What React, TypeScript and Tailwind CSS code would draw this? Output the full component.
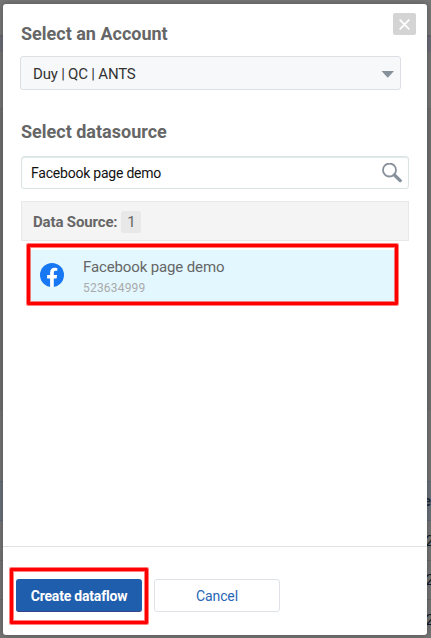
import React from "react";

function PageBehind() {
  return (
    <div className="absolute inset-0 overflow-hidden bg-[#727272]" aria-hidden="true">
      <div className="h-[35px] bg-[#777777]" />
      <div className="h-[17px] border-t-2 border-[#65656f] bg-[#6c6c76]" />
      <div className="h-[56px] bg-[#737373]" />
      <div className="h-[301px] border-t border-[#6a6a6a] bg-[#6f6f6f]" />
      <div className="h-[72px] border-t border-[#6c6c6c] bg-[#737373]" />
      <div className="flex h-[40px] items-center justify-end border-y border-[#5f6a76] bg-[#6a7179] text-[14px] font-bold text-[#222c3a]">
        <span>e</span>
      </div>
      {["a", "b", "c"].map((row) => (
        <div
          key={row}
          className="flex h-[39.5px] items-center justify-end border-b border-[#696969] bg-[#747474] text-[15px] text-[#101a26]"
        >
          <span className="-mr-[3px] pt-px">2</span>
        </div>
      ))}
    </div>
  );
}

function Frame({ className }: { className: string }) {
  return (
    <div
      className={`pointer-events-none absolute rounded-[1px] border-[3px] border-[#ff0000] shadow-[0_0_0_1px_#ff000080,inset_0_0_0_1px_#ff000080] ${className}`}
    />
  );
}

export default function App() {
  return (
    <div className="relative h-[638px] w-[431px] overflow-hidden font-['Roboto','Liberation_Sans',sans-serif]">
      <PageBehind />
      <section className="relative mt-1 ml-[3px] flex h-[631px] w-[424px] flex-col rounded-[3px] bg-white shadow-[0_0_6px_rgba(0,0,0,0.3)]">
        <button className="absolute top-[9px] right-[11px] flex h-[22px] w-[23px] items-center justify-center rounded-[2px] bg-[#d4d4d4]">
          <svg width="11" height="11" viewBox="0 0 11 11" stroke="#fff" strokeWidth="1.8">
            <path d="M.7.7l9.6 9.6M10.3.7L.7 10.3" />
          </svg>
        </button>

        <div className="h-[542px] pt-[18px] pr-[18px] pl-[18px]">
          <h2 className="h-[34px] text-[18px] leading-6 font-bold text-[#666666]">Select an Account</h2>
          <div className="-ml-px flex h-[34px] w-[381px] items-center justify-between rounded-[3px] border border-[#dce0e5] bg-[#f6f8fa] pr-[6px] pl-[12px] text-[15px] text-[#333333]">
            <span className="pt-0.5 tracking-[-0.2px]">Duy | QC | ANTS</span>
            <svg className="mt-0.5" width="13" height="7" viewBox="0 0 13 7" fill="#87919b">
              <path d="M.5 0H13L6.750 6.700z" />
            </svg>
          </div>

          <h2 className="mt-[30px] h-[36px] text-[18px] leading-6 font-bold text-[#666666]">Select datasource</h2>
          <div className="flex h-[33px] w-[388px] items-center justify-between rounded-[3px] border border-[#dce3e4] pr-[6px] pl-[9px] text-[14px] text-[#111111] shadow-[inset_0_1px_1px_#e2e8e8]">
            <span className="pt-0.5 tracking-[-0.22px]">Facebook page demo</span>
            <svg width="20" height="20" viewBox="0 0 20 20" fill="none" stroke="#87919b">
              <circle cx="7.500" cy="7" r="6.500" strokeWidth="1.800" />
              <path d="M12.400 12L18.200 17.600" strokeWidth="3.300" strokeLinecap="round" />
            </svg>
          </div>

          <div className="mt-3 flex h-[40px] w-[388px] items-center border border-[#e8e8e8] bg-[#f4f4f4] pt-0.5 pl-[11px] text-[15px] font-bold text-[#666666]">
            <span className="tracking-[-0.15px]">Data Source:</span>
            <span className="ml-[4px] flex h-[22px] w-[20px] items-center justify-center rounded-[3px] bg-[#e8e8e8] font-normal">
              1
            </span>
          </div>

          <div className="relative mt-[9px] ml-[9px] flex h-[52px] w-[365px] items-center bg-[#e3f7ff]">
            <Frame className="-top-[6px] -left-[3px] h-[61px] w-[371px]" />
            <svg className="-mt-[3px] ml-[10px] h-6 w-6" viewBox="0 0 24 24">
              <circle cx="12" cy="12" r="12" fill="#1877f2" />
              <path
                fill="#fff"
                d="M10.100 24v-8.400H7.100V12h3V9.400c0-3 1.800-4.700 4.500-4.700 1.300 0 2.700.25 2.700.25v2.900h-1.500c-1.500 0-2 .93-2 1.900V12h3.300l-.53 3.600h-2.770V24z"
              />
            </svg>
            <div className="ml-[19px] pt-[3px]">
              <div className="text-[15px] leading-5 tracking-[-0.13px] text-[#666666]">Facebook page demo</div>
              <div className="pt-px text-[12px] leading-5 tracking-[0.2px] text-[#aaaaaa]">523634999</div>
            </div>
          </div>
        </div>

        <footer className="relative flex flex-1 gap-3 border-t border-[#dfe2e4] pt-[32px] pl-[13px]">
          <button className="h-[33px] w-[126px] rounded-[3px] border-b border-[#3b4288] bg-[#1f5eac] pt-0.5 text-[14px] font-bold tracking-[-0.2px] text-white">
            Create dataflow
          </button>
          <button className="h-[33px] w-[126px] rounded-[3px] border border-[#dee2e6] bg-white pt-0.5 text-[14px] tracking-[-0.1px] text-[#2766b5]">
            Cancel
          </button>
          <Frame className="top-[21px] left-[7px] h-[56px] w-[138px]" />
        </footer>
      </section>
    </div>
  );
}
